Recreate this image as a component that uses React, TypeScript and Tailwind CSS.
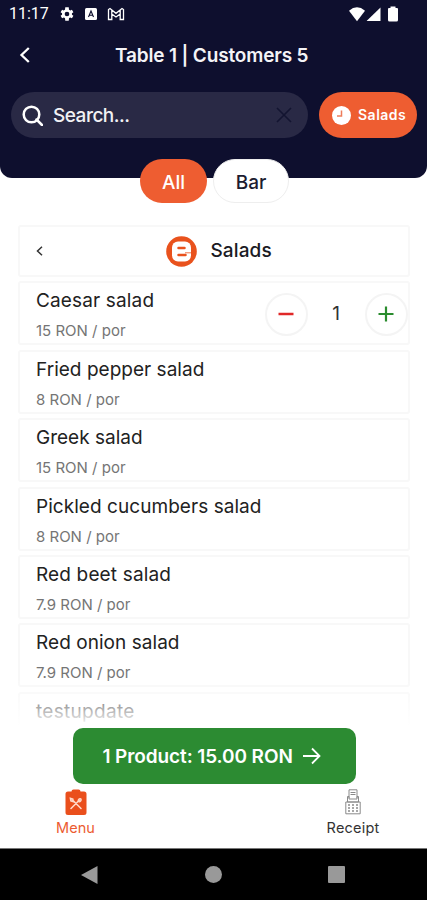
import React, { useState } from "react";

type Product = {
  name: string;
  price?: string;
  nameClass: string;
};

const products: Product[] = [
  { name: "Caesar salad", price: "15 RON / por", nameClass: "tracking-[0.15px]" },
  { name: "Fried pepper salad", price: "8 RON / por", nameClass: "tracking-[0.02px]" },
  { name: "Greek salad", price: "15 RON / por", nameClass: "tracking-[0px]" },
  { name: "Pickled cucumbers salad", price: "8 RON / por", nameClass: "tracking-[0.05px]" },
  { name: "Red beet salad", price: "7.9 RON / por", nameClass: "tracking-[0.15px]" },
  { name: "Red onion salad", price: "7.9 RON / por", nameClass: "tracking-[0.05px]" },
  { name: "testupdate", nameClass: "tracking-[0.3px]" },
];

function StatusBar() {
  return (
    <div className="flex h-7 items-center pl-[9px] pr-[29px] text-white">
      <span className="w-[39px] whitespace-nowrap font-[Roboto] text-[16px] leading-none">11:17</span>
      <svg className="ml-[11px]" width="16" height="16" viewBox="0 0 24 24" fill="currentColor">
        <path
          fillRule="evenodd"
          d="M19.4 13a7.6 7.6 0 0 0 0-2l2.2-1.7-2.2-3.7-2.6 1a8 8 0 0 0-1.8-1L14.600 2h-5.200L9 5.600a8 8 0 0 0-1.800 1l-2.600-1-2.200 3.700L4.600 11a7.600 7.600 0 0 0 0 2l-2.200 1.700 2.200 3.700 2.600-1a8 8 0 0 0 1.800 1l.4 3.600h5.200l.4-3.600a8 8 0 0 0 1.800-1l2.600 1 2.200-3.700zM12 15.500a3.500 3.500 0 1 1 0-7 3.500 3.500 0 0 1 0 7z"
        />
      </svg>
      <svg className="ml-[10px]" width="12" height="12" viewBox="0 0 12 12">
        <rect width="12" height="12" rx="1.500" fill="#fff" />
        <path d="M3.500 9 6 3l2.500 6M4.400 7.200h3.200" fill="none" stroke="#0e0f2e" strokeWidth="1.100" />
      </svg>
      <svg className="ml-[10px]" width="18" height="14" viewBox="0 0 18 14" fill="none" stroke="#fff" strokeWidth="1.300">
        <path d="M1.500 12.500v-10L3 1.500l6 4.800 6-4.800 1.500 1v10h-3.300V7L9 10 4.800 7v5.500zM4.800 7V3M13.200 7V3" />
      </svg>
      <div className="ml-auto flex items-center">
        <svg width="32" height="16" viewBox="0 0 32 16" fill="#fff" className="mr-[7px]">
          <path d="M8 15.200 0 4.700Q8-2 16 4.700z" />
          <path d="M17.800 15V14.700L31.500 1.500V15z" />
        </svg>
        <svg width="10" height="16" viewBox="0 0 10 16" fill="#fff">
          <path d="M2.500 2V.5h5V2H9a1 1 0 0 1 1 1v11a1.500 1.500 0 0 1-1.500 1.500h-7A1.500 1.500 0 0 1 0 14V3a1 1 0 0 1 1-1z" />
        </svg>
      </div>
    </div>
  );
}

function Header() {
  const [search, setSearch] = useState<string>("");

  return (
    <header className="h-[178px] shrink-0 rounded-b-xl bg-[#0e0f2e]">
      <StatusBar />

      {/* Title */}
      <div className="flex h-[54px] items-center px-[19px]">
        <svg width="11" height="16" viewBox="0 0 11 16" fill="none" stroke="#fff" strokeWidth="2.300">
          <path d="M9.800 1 2.500 8l7.300 7" />
        </svg>
        <h1 className="ml-[85px] whitespace-nowrap text-[19px] font-semibold leading-none tracking-[-0.15px] text-[#f4f4f7]">
          Table 1 | Customers 5
        </h1>
      </div>

      {/* Search */}
      <div className="mt-[10px] flex gap-[11px] pl-[11px] pr-[10px]">
        <div className="flex h-[46px] w-[297px] items-center rounded-full bg-[#292945] pl-[11px] pr-[16px]">
          <svg width="21" height="21" viewBox="0 0 21 21" fill="none" stroke="#fff" strokeWidth="2.500">
            <circle cx="9.500" cy="9.500" r="7.800" />
            <path d="m14.500 14.500 5.500 5.500" strokeLinecap="round" />
          </svg>
          <input
            value={search}
            onChange={(e) => setSearch(e.target.value)}
            placeholder="Search..."
            className="ml-[10px] mt-0.5 w-[200px] bg-transparent text-[19px] font-medium tracking-[-0.5px] text-white outline-none placeholder:text-[#f1f1f4]"
          />
          <svg className="ml-auto" width="16" height="16" viewBox="0 0 16 16" stroke="#131431" strokeWidth="1.600">
            <path d="m1 1 14 14M15 1 1 15" />
          </svg>
        </div>
        <button className="flex h-[46px] w-[98px] items-center rounded-full bg-[#ee5d31] pl-[13px] text-white">
          <svg width="19" height="19" viewBox="0 0 19 19">
            <circle cx="9.500" cy="9.500" r="9.500" fill="#fff" />
            <path d="M9.500 4.500V10H5" fill="none" stroke="#ee7d5b" strokeWidth="1.500" />
          </svg>
          <span className="ml-[7px] text-[14px] font-semibold leading-none tracking-[0.5px]">Salads</span>
        </button>
      </div>
    </header>
  );
}

function ProductRow({ product, children }: { product: Product; children?: React.ReactNode }) {
  return (
    <div className="flex h-16 shrink-0 justify-between rounded-[3px] border-2 border-[#f8f8f8] bg-white pl-[16.500px]">
      <div className="pt-[7px]">
        <p className={`whitespace-nowrap text-[19px] leading-[22px] text-[#222] ${product.nameClass}`}>{product.name}</p>
        {product.price && (
          <p className="mt-[9px] whitespace-nowrap text-[15px] leading-[19px] text-[#757575]">{product.price}</p>
        )}
      </div>
      {children}
    </div>
  );
}

function QuantityControl() {
  const [count, setCount] = useState<number>(1);

  return (
    <div className="flex items-center pt-0.5">
      <button
        onClick={() => setCount(Math.max(0, count - 1))}
        className="flex size-[43px] items-center justify-center rounded-full border-2 border-[#f4f4f4]"
      >
        <svg width="16" height="16" viewBox="0 0 16 16" stroke="#e02828" strokeWidth="2.500">
          <path d="M.5 8h15" />
        </svg>
      </button>
      <span className="w-[57px] text-center text-[19px] text-[#333]">{count}</span>
      <button
        onClick={() => setCount(count + 1)}
        className="flex size-[43px] items-center justify-center rounded-full border-2 border-[#f4f4f4]"
      >
        <svg width="16" height="16" viewBox="0 0 16 16" stroke="#2a8c2e" strokeWidth="2.200">
          <path d="M.5 8h15M8 .5v15" />
        </svg>
      </button>
    </div>
  );
}

function BottomTabs() {
  return (
    <nav className="flex h-[63px] shrink-0 justify-between bg-white pl-[56px] pr-[47px] pt-[4px]">
      <div className="flex w-[39px] flex-col items-center">
        <svg width="22" height="27" viewBox="0 0 22 27">
          <path d="M6.500 2.500Q6.500.5 8.500.5h5q2 0 2 2H19q2.500 0 2.500 2.500v18.500Q21.500 26 19 26H3Q.5 26 .5 23.500V5Q.5 2.500 3 2.500z" fill="#ea4f1c" />
          <path d="m6 19.500 8.200-8.200m1.600-1.300c-1.200-.9-3.200.8-2.300 2.400 1.600.8 3.200-1.200 2.300-2.400zM16 19.500l-8.200-8.200m-2.300-1.800.4 2.300 2.300.7-.4-2.300z" fill="none" stroke="#ffd9c9" strokeWidth="1.600" strokeLinecap="round" />
        </svg>
        <span className="mt-[3px] text-[14.500px] leading-[18px] tracking-[0.1px] text-[#ec5b31]">Menu</span>
      </div>
      <div className="flex w-[54px] flex-col items-center">
        <svg width="16" height="26" viewBox="0 0 16 26" fill="none" stroke="#8a8a8a" strokeWidth="1">
          <path d="M4 9V.8h8V9M5.500 3.500h5M5.500 5.500h5" />
          <path d="M2.500 13V7.500H4V10h8V7.500h1.500V13zM.8 13h14.400v11.800H.8z" />
          <path d="M3 16h10M3 19h10M3 22h10" strokeWidth="1.500" strokeDasharray="2 2" />
        </svg>
        <span className="mt-[4px] text-[14.500px] leading-[18px] tracking-[0.2px] text-[#333]">Receipt</span>
      </div>
    </nav>
  );
}

function App() {
  return (
    <div className="flex h-[900px] w-[427px] flex-col overflow-hidden bg-white font-[Inter,sans-serif]">
      <Header />

      {/* Category tabs */}
      <div className="relative -mt-[19px] flex h-11 shrink-0 gap-1.5 pl-[140px]">
        <button className="w-[67px] rounded-full bg-[#ee5d31] pt-1 text-[19px] font-medium text-white">All</button>
        <button className="w-[76px] rounded-full border border-[#eee] bg-white pt-1 text-[19px] font-medium text-[#1c1c30]">
          Bar
        </button>
      </div>

      {/* Products */}
      <main className="relative flex h-[524px] shrink-0 flex-col overflow-hidden px-[17.5px] pt-[22px]">
        <div className="flex h-[52px] shrink-0 items-center rounded-[3px] border-2 border-[#f8f8f8] pl-[16px]">
          <svg width="7" height="10" viewBox="0 0 7 10" fill="none" stroke="#333" strokeWidth="1.500">
            <path d="M6 .8 1.500 5 6 9.200" />
          </svg>
          <svg className="ml-[123px]" width="31" height="31" viewBox="0 0 31 31">
            <circle cx="15.500" cy="15.500" r="15.300" fill="#e9521d" />
            <rect x="6" y="5.500" width="19" height="20" rx="6" fill="#fff" />
            <path d="M12.500 12h6M12.500 19h7" stroke="#e9521d" strokeWidth="2.500" strokeLinecap="round" />
            <path d="M19 16.800h6.500" stroke="#e9521d" strokeWidth=".8" />
          </svg>
          <span className="ml-[14px] mt-px text-[19px] font-medium tracking-[0.1px] text-[#1b1b24]">Salads</span>
        </div>
        <div className="mt-[4.400px] flex flex-col gap-[4.400px]">
          {products.map((product, index) => (
            <ProductRow key={product.name} product={product}>
              {index === 0 && <QuantityControl />}
            </ProductRow>
          ))}
        </div>
        <div className="absolute inset-x-0 bottom-0 h-[50px] bg-linear-to-b from-transparent to-white" />
      </main>

      <div className="flex h-[58px] shrink-0 justify-center pl-px pt-px">
        <button className="flex h-[56px] w-[283px] items-center rounded-[10px] bg-[#2c8b32] pl-[30px] text-white">
          <span className="mt-px whitespace-nowrap text-[19px] font-semibold leading-none tracking-[-0.1px]">
            1 Product: 15.00 RON
          </span>
          <svg className="ml-[9px]" width="19" height="18" viewBox="0 0 19 18" fill="none" stroke="#fff" strokeWidth="1.800">
            <path d="M1 9h16M10 1.500 17.500 9 10 16.500" />
          </svg>
        </button>
      </div>

      <BottomTabs />

      {/* System navigation */}
      <div className="flex h-[52px] shrink-0 items-center justify-between border-t border-[#777] bg-black pl-[81px] pr-[82px] text-[#999]">
        <svg width="17" height="18" viewBox="0 0 17 18" fill="currentColor">
          <path d="M0 9 16.500 0v18z" />
        </svg>
        <div className="size-[17px] rounded-full bg-[#999]" />
        <div className="size-[17px] rounded-[1px] bg-[#999]" />
      </div>
    </div>
  );
}

export default App;
